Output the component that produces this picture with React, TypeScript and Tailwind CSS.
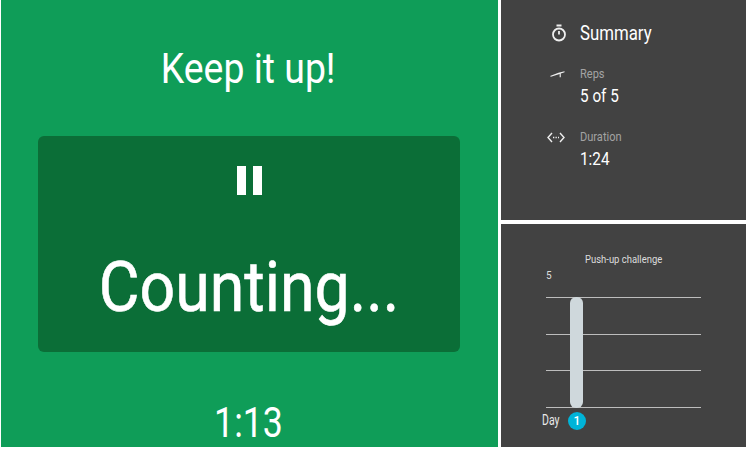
const font = "font-['Roboto',sans-serif]";

function Stat({ icon, label, value }: { icon: React.ReactNode; label: string; value: string }) {
  return (
    <div className="flex h-[63px]">
      <div className="flex w-[79px] h-[18px] justify-end pr-[15px] items-center">{icon}</div>
      <div>
        <div className="text-[13px] leading-[18px] text-[#a3a3a3] origin-left scale-x-[0.85]">{label}</div>
        <div className="text-[18px] leading-[26px] text-white origin-left scale-x-[0.85]">{value}</div>
      </div>
    </div>
  );
}

export default function App() {
  return (
    <div className={`${font} w-[747px] h-[449px] bg-white flex pl-[1px] pb-[2px] overflow-hidden`}>
      <div className="w-[497px] h-[447px] bg-[#0f9d58] flex flex-col items-center text-white">
        <div className="mt-[44px] text-[42px] leading-[50px] scale-x-[0.89] -translate-x-[1px]">Keep it up!</div>
        <div className="mt-[42px] shrink-0 self-start ml-[37px] w-[422px] h-[216px] bg-[#0b6e37] rounded-[6px] flex flex-col items-center">
          <div className="mt-[30px] flex gap-[7px]">
            <div className="w-[9px] h-[29px] bg-white" />
            <div className="w-[9px] h-[29px] bg-white" />
          </div>
          <div className="mt-[47px] text-[70px] leading-[90px] scale-x-[0.895] whitespace-nowrap [-webkit-text-stroke:0.6px_white]">Counting...</div>
        </div>
        <div className="mt-[51px] text-[42px] leading-[40px] scale-x-[0.85] -translate-x-[1px]">1:13</div>
      </div>
      <div className="w-[3px] shrink-0" />
      <div className="w-[245px] flex flex-col">
        <div className="h-[220px] bg-[#424242] pt-[18px]">
          <div className="flex h-[29px] items-center">
            <div className="w-[79px] flex justify-end pr-[13px]">
              <svg width="16" height="18" viewBox="0 0 16 18" fill="none" stroke="#eeeeee" strokeWidth="1.8">
                <circle cx="8" cy="10.5" r="6" />
                <path d="M5.5 1.5h5M8 10.5V7" />
              </svg>
            </div>
            <div className="text-[20px] text-white origin-left scale-x-[0.84]">Summary</div>
          </div>
          <div className="mt-[18px]">
            <Stat
              label="Reps"
              value="5 of 5"
              icon={
                <svg width="15" height="8" viewBox="0 0 16 8" fill="#eeeeee">
                  <path d="M0 6 L9 2.6 L15.5 1 V2 L11.5 3.4 V7.5 H10.3 V4 L1 7 Z" />
                </svg>
              }
            />
            <Stat
              label="Duration"
              value="1:24"
              icon={
                <svg width="18" height="11" viewBox="0 0 18 11" fill="none" stroke="#eeeeee" strokeWidth="1.4">
                  <path d="M5 1 L1 5.5 L5 10 M13 1 L17 5.5 L13 10" />
                  <path d="M6 5.5h6" strokeDasharray="1.3 1.2" />
                </svg>
              }
            />
          </div>
        </div>
        <div className="h-[4px] shrink-0" />
        <div className="h-[223px] bg-[#424242] flex flex-col">
          <div className="mt-[29px] ml-[84px] text-[11px] leading-[14px] text-[#dddddd] origin-left scale-x-[0.86] whitespace-nowrap">Push-up challenge</div>
          <div className="mt-[2px] ml-[45px] text-[10px] leading-[14px] text-[#dddddd]">5</div>
          <div className="mt-[14px] ml-[45px] w-[155px] h-[111px] relative flex flex-col justify-between">
            <div className="h-px bg-[#bdbdbd]" />
            <div className="h-px bg-[#bdbdbd]" />
            <div className="h-px bg-[#bdbdbd]" />
            <div className="h-px bg-[#bdbdbd]" />
            <div className="absolute left-[24px] top-0 bottom-0 w-[13px] rounded-[6px] bg-[#cfd8dc]" />
          </div>
          <div className="flex items-center mt-[2px]">
            <div className="ml-[41px] w-[26px] text-[14px] text-[#e8e8e8] origin-left scale-x-[0.75]">Day</div>
            <div className="w-[18px] h-[18px] rounded-full bg-[#00b4d8] text-white text-[12px] font-medium flex items-center justify-center">1</div>
          </div>
        </div>
      </div>
    </div>
  );
}
